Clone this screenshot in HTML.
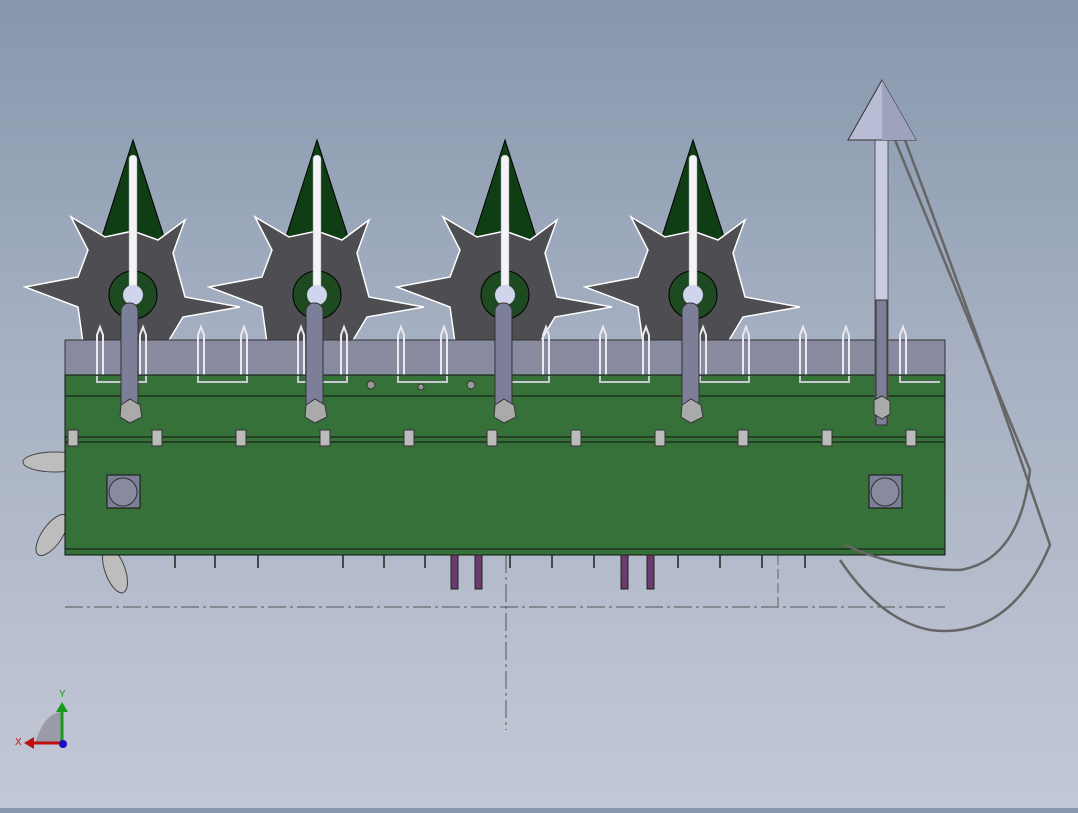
<!DOCTYPE html>
<html><head><style>
html,body{margin:0;padding:0}
body{width:1078px;height:808px;overflow:hidden;background:linear-gradient(#8797ad 0%,#a7b1c3 45%,#c3c8d6 100%);font-family:"Liberation Sans",sans-serif}
</style></head><body>
<svg width="1078" height="808" viewBox="0 0 1078 808" xmlns="http://www.w3.org/2000/svg">
<defs>
<g id="unit">
  <polygon points="0,-155 -48,-5 48,-5" fill="#0f3d14" stroke="#000" stroke-width="1"/>
  <polygon points="-108,-8 -55,-18 -45,-45 -62,-78 -28,-58 0,-64 25,-55 52,-75 40,-42 52,2 107,12 50,22 32,52 22,78 -8,65 -32,78 -50,48 -55,12" fill="#4e4e52" stroke="#fff" stroke-width="1.5"/>
  <circle cx="0" cy="0" r="24" fill="#1e4a22" stroke="#000"/>
  <rect x="-4" y="-140" width="8" height="135" rx="4" fill="#f4f4f8" stroke="#999" stroke-width="0.5"/>
  <circle cx="0" cy="0" r="10" fill="#d0d4ec"/>
</g>
<g id="rod">
  <rect x="-9" y="8" width="17" height="118" rx="8" fill="#7d7f98" stroke="#333"/>
  <polygon points="-9,110 0,104 10,110 12,122 0,128 -10,122" fill="#aaa" stroke="#333"/>
</g>
</defs>
<line x1="65" y1="607" x2="945" y2="607" stroke="#555" stroke-dasharray="18,4,3,4" stroke-width="1"/>
<line x1="506" y1="555" x2="506" y2="730" stroke="#555" stroke-dasharray="18,4,3,4" stroke-width="1"/>
<line x1="778" y1="555" x2="778" y2="607" stroke="#666" stroke-dasharray="10,4" stroke-width="1"/>
<ellipse cx="55" cy="462" rx="32" ry="10" fill="#bdbdbd" stroke="#444"/>
<ellipse cx="52" cy="535" rx="10" ry="24" transform="rotate(35 52 535)" fill="#bdbdbd" stroke="#444"/>
<ellipse cx="115" cy="570" rx="10" ry="24" transform="rotate(-20 115 570)" fill="#bdbdbd" stroke="#444"/>
<use href="#unit" x="133" y="295"/>
<use href="#unit" x="317" y="295"/>
<use href="#unit" x="505" y="295"/>
<use href="#unit" x="693" y="295"/>
<rect x="65" y="340" width="880" height="36" fill="#888aa0" stroke="#333"/>
<g fill="none" stroke="#e8e8ee" stroke-width="2">
<path d="M97 382V335l3-8 3 8V382H140V335l3-8 3 8V382"/>
<path d="M198 382V335l3-8 3 8V382H241V335l3-8 3 8V382"/>
<path d="M298 382V335l3-8 3 8V382H341V335l3-8 3 8V382"/>
<path d="M398 382V335l3-8 3 8V382H441V335l3-8 3 8V382"/>
<path d="M500 382V335l3-8 3 8V382H543V335l3-8 3 8V382"/>
<path d="M600 382V335l3-8 3 8V382H643V335l3-8 3 8V382"/>
<path d="M700 382V335l3-8 3 8V382H743V335l3-8 3 8V382"/>
<path d="M800 382V335l3-8 3 8V382H843V335l3-8 3 8V382"/>
<path d="M900 382V335l3-8 3 8V382H940"/>
</g>
<rect x="65" y="375" width="880" height="180" fill="#37713a" stroke="#111"/>
<line x1="65" y1="396" x2="945" y2="396" stroke="#111"/>
<line x1="65" y1="437" x2="945" y2="437" stroke="#111"/>
<line x1="65" y1="442" x2="945" y2="442" stroke="#111"/>
<line x1="65" y1="549" x2="945" y2="549" stroke="#111"/>
<g fill="none" stroke="#c8c8d0" stroke-width="2">
<path d="M97 376V382H146V376M198 376V382H247V376M298 376V382H347V376M398 376V382H447V376M500 376V382H549V376M600 376V382H649V376M700 376V382H749V376M800 376V382H849V376M900 376V382H940"/>
</g>
<g fill="#bbb" stroke="#333">
<rect x="68" y="430" width="10" height="16"/><rect x="152" y="430" width="10" height="16"/><rect x="236" y="430" width="10" height="16"/><rect x="320" y="430" width="10" height="16"/><rect x="404" y="430" width="10" height="16"/><rect x="487" y="430" width="10" height="16"/><rect x="571" y="430" width="10" height="16"/><rect x="655" y="430" width="10" height="16"/><rect x="738" y="430" width="10" height="16"/><rect x="822" y="430" width="10" height="16"/><rect x="906" y="430" width="10" height="16"/>
</g>
<rect x="107" y="475" width="33" height="33" fill="#7d7f98" stroke="#111"/><circle cx="123" cy="492" r="14" fill="#888aa0" stroke="#333"/>
<rect x="869" y="475" width="33" height="33" fill="#7d7f98" stroke="#111"/><circle cx="885" cy="492" r="14" fill="#888aa0" stroke="#333"/>
<circle cx="371" cy="385" r="4" fill="#999" stroke="#333"/><circle cx="471" cy="385" r="4" fill="#999" stroke="#333"/><circle cx="421" cy="387" r="3" fill="#999" stroke="#333"/>
<use href="#rod" x="130" y="295"/>
<use href="#rod" x="315" y="295"/>
<use href="#rod" x="504" y="295"/>
<use href="#rod" x="691" y="295"/>
<rect x="875" y="140" width="13" height="285" fill="#c8cce0" stroke="#555"/>
<rect x="876" y="300" width="11" height="125" fill="#7d7f98" stroke="#333"/>
<polygon points="874,400 882,396 890,401 890,414 882,419 874,414" fill="#aaa" stroke="#333"/>
<polygon points="882,80 848,140 916,140" fill="#b8bcd4" stroke="#333"/>
<polygon points="882,80 882,140 916,140" fill="#9ea2bc"/>
<g fill="none" stroke="#666" stroke-width="2.5">
<path d="M895 140 Q960 300 1030 470 Q1020 560 960 570 Q900 570 845 545"/>
<path d="M905 140 Q980 340 1050 545 Q1010 640 930 630 Q880 620 840 560"/>
</g>
<g stroke="#222" stroke-width="1.5">
<line x1="175" y1="555" x2="175" y2="568"/><line x1="215" y1="555" x2="215" y2="568"/><line x1="258" y1="555" x2="258" y2="568"/><line x1="343" y1="555" x2="343" y2="568"/><line x1="384" y1="555" x2="384" y2="568"/><line x1="425" y1="555" x2="425" y2="568"/><line x1="510" y1="555" x2="510" y2="568"/><line x1="552" y1="555" x2="552" y2="568"/><line x1="594" y1="555" x2="594" y2="568"/><line x1="678" y1="555" x2="678" y2="568"/><line x1="720" y1="555" x2="720" y2="568"/><line x1="762" y1="555" x2="762" y2="568"/><line x1="805" y1="555" x2="805" y2="568"/>
</g>
<g fill="#6a3a70" stroke="#222"><rect x="451" y="555" width="7" height="34"/><rect x="475" y="555" width="7" height="34"/><rect x="621" y="555" width="7" height="34"/><rect x="647" y="555" width="7" height="34"/></g>
<path d="M35 743 Q45 712 62 712 L62 743Z" fill="#9a9aa8"/>
<line x1="62" y1="743" x2="62" y2="710" stroke="#1a9a1a" stroke-width="3"/><polygon points="56,712 68,712 62,702" fill="#1a9a1a"/>
<line x1="62" y1="743" x2="32" y2="743" stroke="#c01010" stroke-width="3"/><polygon points="34,737 34,749 24,743" fill="#c01010"/>
<circle cx="63" cy="744" r="4" fill="#1010c0"/>
<text x="59" y="697" font-size="10" fill="#1a9a1a">Y</text>
<text x="15" y="745" font-size="10" fill="#c01010">X</text>
</svg>
</body></html>
